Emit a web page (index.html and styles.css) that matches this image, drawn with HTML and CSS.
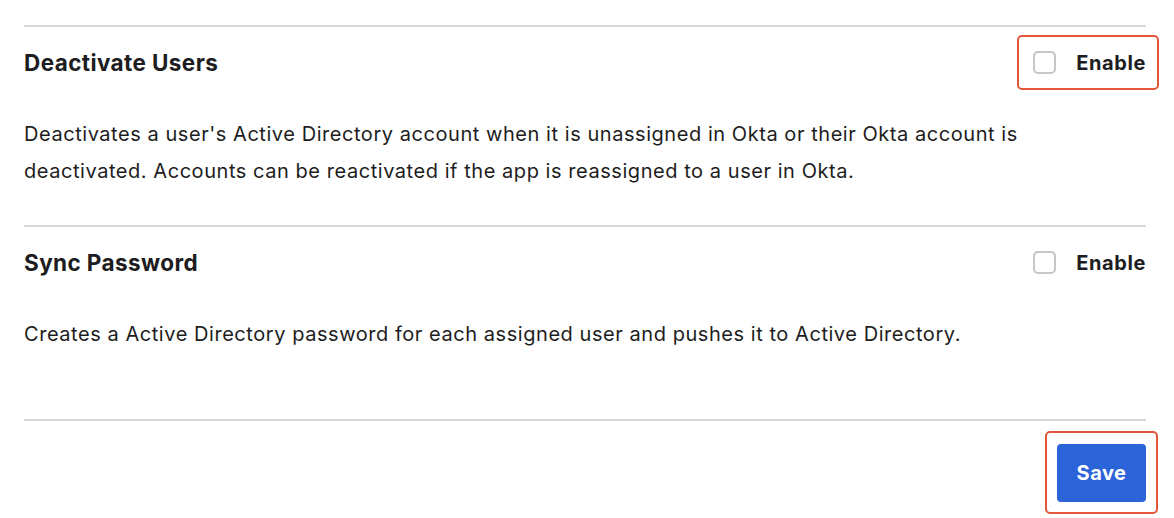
FILE: index.html
```html
<!DOCTYPE html>
<html>
<head>
<meta charset="utf-8">
<link rel="stylesheet" href="styles.css">
</head>
<body>
<div class="page">
  <section class="setting">
    <div class="setting-head">
      <h2 class="setting-title">Deactivate Users</h2>
      <div class="highlight highlight-toggle">
        <label class="toggle"><span class="box"></span><span class="toggle-text">Enable</span></label>
      </div>
    </div>
    <p class="setting-desc">Deactivates a user's Active Directory account when it is unassigned in Okta or their Okta account is deactivated. Accounts can be reactivated if the app is reassigned to a user in Okta.</p>
  </section>
  <section class="setting setting-last">
    <div class="setting-head">
      <h2 class="setting-title">Sync Password</h2>
      <div class="plain-toggle">
        <label class="toggle"><span class="box"></span><span class="toggle-text">Enable</span></label>
      </div>
    </div>
    <p class="setting-desc">Creates a Active Directory password for each assigned user and pushes it to Active Directory.</p>
  </section>
  <footer class="actions">
    <div class="highlight highlight-save">
      <button class="save-btn" type="button">Save</button>
    </div>
  </footer>
</div>
</body>
</html>
```

FILE: styles.css
```css
* { box-sizing: border-box; }
html, body { margin: 0; padding: 0; background: #fff; }
body {
  font-family: Inter, "Noto Sans", sans-serif;
  color: #1d1d21;
}
.page {
  padding: 25px 28px 0 24px;
}
.setting {
  border-top: 2px solid #d7d7dc;
  padding-top: 8px;
  padding-bottom: 35px;
}
.setting-last { padding-bottom: 66px; }
.setting-head {
  display: flex;
  align-items: center;
  justify-content: space-between;
  height: 55px;
}
.setting-title {
  margin: 0;
  font-size: 22.5px;
  font-weight: 700;
  letter-spacing: 0.4px;
}
.highlight {
  border: 2px solid #e2563a;
  border-radius: 5px;
}
.highlight-toggle {
  height: 55px;
  display: flex;
  align-items: center;
  padding: 0 11px 0 14px;
  margin-right: -13px;
}
.plain-toggle {
  display: flex;
  align-items: center;
}
.toggle {
  display: flex;
  align-items: center;
  gap: 20px;
}
.box {
  width: 23px;
  height: 23px;
  border: 2px solid #c5c5ca;
  border-radius: 5px;
  background: #fff;
}
.toggle-text {
  font-size: 20px;
  font-weight: 700;
  letter-spacing: 0.6px;
}
.setting-desc {
  margin: 26px 0 0;
  font-size: 20px;
  line-height: 37px;
  letter-spacing: 0.55px;
}
.actions {
  border-top: 2px solid #d7d7dc;
  display: flex;
  justify-content: flex-end;
  padding-top: 10px;
}
.highlight-save {
  padding: 11px 10px 10px 10px;
  margin-right: -12px;
}
.save-btn {
  display: block;
  width: 89px;
  height: 58px;
  border: 0;
  border-radius: 4px;
  background: #2b63d9;
  color: #fff;
  font-family: inherit;
  font-size: 20px;
  font-weight: 700;
  letter-spacing: 0.5px;
}
```
